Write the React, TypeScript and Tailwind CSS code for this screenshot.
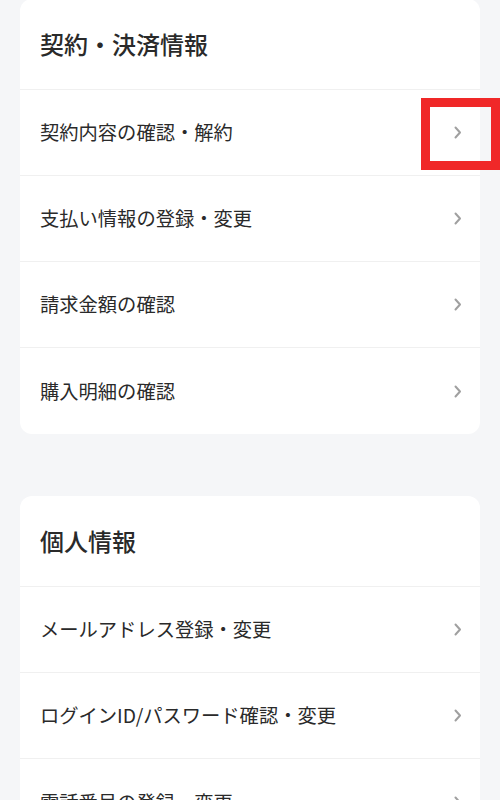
import React from 'react';

const sections = [
  {
    title: '契約・決済情報',
    items: ['契約内容の確認・解約', '支払い情報の登録・変更', '請求金額の確認', '購入明細の確認'],
  },
  {
    title: '個人情報',
    items: ['メールアドレス登録・変更', 'ログインID/パスワード確認・変更', '電話番号の登録・変更'],
  },
];

const Chevron = () => (
  <svg width="8" height="13" viewBox="0 0 8 13" fill="none" className="shrink-0">
    <path d="M1.5 1.5 L6 6.5 L1.5 11.5" stroke="#a0a0a0" strokeWidth="2" strokeLinecap="round" strokeLinejoin="round" />
  </svg>
);

const App = () => {
  return (
    <div
      className="relative w-[500px] h-[800px] overflow-hidden bg-[#f5f6f8] px-5"
      style={{ fontFamily: '"Noto Sans CJK JP", "Noto Sans", sans-serif' }}
    >
      <div className="flex flex-col gap-[62px] -mt-[1px]">
        {sections.map((section) => (
          <div key={section.title} className="bg-white rounded-xl">
            <div className="h-[91px] flex items-center px-5 border-b border-[#f0f0f0]">
              <h2 className="text-[24px] font-medium text-[#2a2a2a]">{section.title}</h2>
            </div>
            {section.items.map((item, index) => (
              <div
                key={item}
                className={`h-[86px] flex items-center justify-between pl-5 pr-[18px] ${
                  index < section.items.length - 1 ? 'border-b border-[#f0f0f0]' : ''
                }`}
              >
                <span className="text-[19.3px] text-[#2a2a2a]">{item}</span>
                <Chevron />
              </div>
            ))}
          </div>
        ))}
      </div>

      {/* annotation box */}
      <div className="absolute left-[421px] top-[98px] w-[79px] h-[72px] border-[9px] border-[#f02828]" />
    </div>
  );
};

export default App;
